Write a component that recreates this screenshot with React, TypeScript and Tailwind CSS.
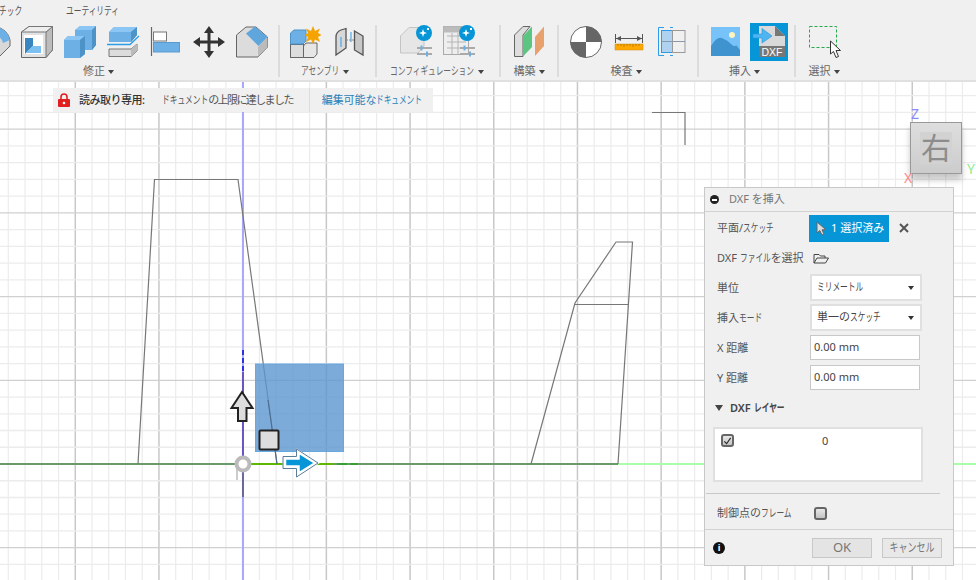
import type { ReactNode } from "react"

const MAJOR = 83.7
const MINOR = MAJOR / 5

const vLines = Array.from({ length: 60 }, (_, i) => ({ x: 8.3 + i * MINOR, major: i % 5 === 4 }))
const hLines = Array.from({ length: 32 }, (_, i) => ({ y: 45.5 + i * MINOR, major: i % 5 === 0 }))

// katakana in the reference are condensed to about 7.7px per character
function K({ children }: { children: string }) {
  return (
    <span
      className="inline-block origin-left scale-x-[0.7] whitespace-nowrap"
      style={{ width: children.length * 7.7 }}
    >
      {children}
    </span>
  )
}

function Ico({ x, children }: { x: number; children: ReactNode }) {
  return (
    <svg viewBox={`${x} 23 43 38`} className="h-[38px] w-[43px] shrink-0 overflow-visible">
      {children}
    </svg>
  )
}

function Caret() {
  return <span className="ml-[3px] inline-block h-0 w-0 border-x-[3px] border-t-[4px] border-x-transparent border-t-[#444] align-middle" />
}

function Group({ width, pad, label, end, labelPad, children }: { width: string; pad?: string; label: ReactNode; end?: boolean; labelPad?: string; children: ReactNode }) {
  return (
    <div className={`flex shrink-0 flex-col ${width}`}>
      <div className={`flex h-[38px] ${end ? "justify-end pr-[4px]" : ""} ${pad ?? ""}`}>{children}</div>
      <div className={`mt-[2px] text-center text-[11px] leading-[16px] text-[#666] ${labelPad ?? ""}`}>
        {label}
        <Caret />
      </div>
    </div>
  )
}

function Sep() {
  return <div className="mt-[2px] h-[52px] w-[2px] shrink-0 bg-[#dcdcdc]" />
}

function Toolbar() {
  return (
    <div className="h-[82px] overflow-hidden border-b-2 border-[#e0e0e0] bg-[#f0f0f0]">
      <div className="h-[23px] text-[11px] leading-[22px] text-[#555]">
        <div className="flex h-[22px]">
          <div className="w-[66px] -translate-x-[1px]">
            <K>チック</K>
          </div>
          <K>ユーティリティ</K>
        </div>
      </div>
      <div className="flex -ml-[84px]">
        <Group width="w-[362px]" end labelPad="pl-[3px]" label="修正">
          <Ico x={-27}>
            <path d="M-4 27 A16 16 0 0 1 10 40 L10 46 L0 56 L-6 56 Z" fill="#d8d8d8" stroke="#666" />
            <path d="M-4 27 A16 16 0 0 1 10 40 L3 43 A9 9 0 0 0 -4 36 Z" fill="#6cb0e6" />
          </Ico>
          <Ico x={16}>
            <path d="M21.5 57.5 V32 L29 26.5 H52.5 V50 L46 57.5 Z" fill="#e2e2e2" stroke="#666" />
            <path d="M46 32 L52.5 26.5 V50 L46 57.5 Z" fill="#bcbcbc" stroke="#777" />
            <path d="M21.5 32 L29 26.5 H52.5 L46 32 Z" fill="#eee" stroke="#777" />
            <rect x="24" y="35" width="19" height="19" fill="#fff" />
            <path d="M25 38 H33 V46 L25 54 Z" fill="#3a86bf" />
            <path d="M33 46 H41 V53 H26 Z" fill="#7cc0f2" />
          </Ico>
          <Ico x={59}>
            <path d="M64 40 L68 36 H75 V30 L80 26 H96 V45 L92 50 H85 V54 L80 58 H64 Z" fill="#6cb0e6" />
            <path d="M75 30 L80 26 H96 L92 30 Z M64 40 L68 36 H84 L80 40 Z" fill="#8cc6f5" />
            <path d="M92 30 L96 26 V45 L92 50 Z M80 40 L85 36 V54 L80 58 Z" fill="#4d93c8" />
          </Ico>
          <Ico x={102}>
            <path d="M109 49 H131 L137 44 V51 L131 56.5 H109 Z" fill="#dcdcdc" stroke="#777" />
            <path d="M131 49 L137 44 V51 L131 56.5 Z" fill="#bbb" />
            <path d="M109 32 L114 27 H137 V35 L131 42 H109 Z" fill="#6cb0e6" />
            <path d="M109 32 L114 27 H137 L131 32 Z" fill="#8cc6f5" />
            <path d="M131 32 L137 27 V35 L131 42 Z" fill="#4d93c8" />
            <path d="M107 44.5 H130 L139 36" fill="none" stroke="#2d9be8" strokeWidth="1.3" />
          </Ico>
          <Ico x={145}>
            <path d="M151.5 27 V56" stroke="#666" strokeWidth="1.2" />
            <rect x="153.5" y="32" width="13" height="9" fill="#fff" stroke="#777" />
            <rect x="153.5" y="42.5" width="26" height="9.5" fill="#6cb0e6" stroke="#5a9bd0" />
          </Ico>
          <Ico x={188}>
            <path d="M209 30 V54 M197 42 H221" stroke="#333" strokeWidth="3" />
            <path d="M209 26 L214 33 H204 Z M209 58 L214 51 H204 Z M193 42 L200 37 V47 Z M225 42 L218 37 V47 Z" fill="#333" />
          </Ico>
          <Ico x={231}>
            <path d="M236.5 57 V35 L246 27 H256 L267.5 37 V47 L258 57 Z" fill="#dcdcdc" stroke="#666" />
            <path d="M258 57 V47 L267.5 37 V47 Z" fill="#bbb" />
            <path d="M246 33.5 L255 26.5 L267.5 37 L258.5 46 Z" fill="#5fa6dd" />
          </Ico>
        </Group>
        <Sep />
        <Group width="w-[95px]" pad="pl-[4px]" labelPad="pr-[5px]" label={<K>アセンブリ</K>}>
          <Ico x={284}>
            <rect x="290.5" y="44.5" width="13" height="13" fill="#ddd" stroke="#666" />
            <path d="M303.5 57.5 V46 L306 43 H317 V54 L314 57.5 Z" fill="#e6e6e6" stroke="#666" />
            <path d="M290.5 44 V33 L294 30 H306 V41 L303 44 Z" fill="#6cb0e6" stroke="#4d93c8" />
            <path d="M313 26 L315 31 L320 28.5 L318 33 L321.5 35 L318 37 L320 42 L315 39.5 L313 44 L311 39.5 L306 42 L308 37 L304.5 35 L308 33 L306 28.5 L311 31 Z" fill="#f5a300" />
          </Ico>
          <Ico x={327}>
            <path d="M336 37 Q336 32 341 30 L346 28.5 V48 L336 55 Z" fill="#d8d8d8" stroke="#555" strokeWidth="1.3" />
            <path d="M354.5 31 L363 36 V55 L354.5 50 Z" fill="#c8c8c8" stroke="#555" strokeWidth="1.3" />
            <path d="M341 37 V47 M351 32 V42" stroke="#2d9be8" />
            <path d="M346 40 H354" stroke="#888" strokeDasharray="2 1" />
          </Ico>
        </Group>
        <Sep />
        <Group width="w-[122px]" pad="pl-[18px]" labelPad="pr-[2px]" label={<K>コンフィギュレーション</K>}>
          <Ico x={395}>
            <path d="M400.5 53 V36 L409 27.5 H424 V46 L418 53 Z" fill="#e6e6e6" stroke="#c4c4c4" />
            <circle cx="424" cy="33" r="8" fill="#0696d7" />
            <path d="M423 29 L424 32 L427 33 L424 34 L423 37 L422 34 L419 33 L422 32 Z M427 28 H429 V30 H427 Z" fill="#fff" />
            <path d="M417 48 H432 M417 54 H432" stroke="#aaa" strokeWidth="2" />
            <path d="M421.5 45.5 V50.5 M427 51.5 V56.5" stroke="#6cb0e6" strokeWidth="2" />
          </Ico>
          <Ico x={438}>
            <rect x="443.5" y="26.5" width="25" height="28" fill="#eee" stroke="#aaa" />
            <rect x="443.5" y="26.5" width="25" height="6" fill="#bbb" />
            <path d="M447 36 H466 M447 42 H466 M447 48 H466 M452 33 V54 M458 33 V54" stroke="#b4b4b4" />
            <circle cx="467" cy="33" r="8" fill="#0696d7" />
            <path d="M466 29 L467 32 L470 33 L467 34 L466 37 L465 34 L462 33 L465 32 Z M470 28 H472 V30 H470 Z" fill="#fff" />
            <path d="M460 48 H475 M460 54 H475" stroke="#aaa" strokeWidth="2" />
            <path d="M464.5 45.5 V50.5 M470 51.5 V56.5" stroke="#6cb0e6" strokeWidth="2" />
          </Ico>
        </Group>
        <Sep />
        <Group width="w-[56px]" pad="pl-[7px]" label="構築">
          <Ico x={508}>
            <path d="M514.5 56.5 V35 L523 26.5 H530 L523 35 V56.5 Z" fill="#dedede" stroke="#666" />
            <path d="M523 36 L532 26.5 V47 L523 56.5 Z" fill="#5cc581" />
            <path d="M535 37 L544 26.5 V46 L535 56 Z" fill="#e8a06c" />
          </Ico>
        </Group>
        <Sep />
        <Group width="w-[138px]" pad="pl-[6px]" labelPad="pr-[4px]" label="検査">
          <Ico x={565}>
            <circle cx="586" cy="42" r="15.5" fill="#fff" stroke="#666" />
            <path d="M586 42 V26.5 A15.5 15.5 0 0 1 601.5 42 Z M586 42 V57.5 A15.5 15.5 0 0 1 570.5 42 Z" fill="#666" />
          </Ico>
          <Ico x={608}>
            <path d="M615.5 34 V43 M642.5 34 V43 M616 38.5 H642" stroke="#555" />
            <path d="M616 38.5 L621 36 V41 Z M642 38.5 L637 36 V41 Z" fill="#555" />
            <rect x="615" y="44" width="28" height="6" fill="#ffa800" stroke="#c98a10" strokeWidth="0.5" />
            <path d="M618 44 V46 M621 44 V46 M624 44 V47 M627 44 V46 M630 44 V46 M633 44 V47 M636 44 V46 M639 44 V46" stroke="#a06c00" strokeWidth="0.7" />
          </Ico>
          <Ico x={651}>
            <rect x="661.5" y="30.5" width="11" height="22" fill="#aed2f0" stroke="#2d9be8" />
            <rect x="672.5" y="30.5" width="12.5" height="22" fill="none" stroke="#999" />
            <path d="M661.5 41.5 H685" stroke="#8a9aa8" />
            <path d="M664 27.5 H658.5 V55.5 H664 M670 27.5 H673 M670 55.5 H673" fill="none" stroke="#2d9be8" />
          </Ico>
        </Group>
        <Sep />
        <Group width="w-[95px]" pad="pl-[6px]" labelPad="pr-[4px]" label="挿入">
          <Ico x={705}>
            <rect x="711" y="27" width="29" height="29" fill="#77c2f9" />
            <path d="M711 46 Q717 36 722 38 T731 44 T736 45 L740 50 V56 H711 Z" fill="#3f94cf" />
            <circle cx="732" cy="35" r="3" fill="#fdf5c0" />
          </Ico>
          <Ico x={748}>
            <rect x="750" y="23" width="38" height="38" fill="#0696d7" />
            <path d="M759 26 H775 L785 36 V57 H759 Z" fill="#d9d9d9" />
            <path d="M775 26 L785 36 H775 Z" fill="#777" />
            <rect x="759" y="46" width="26" height="11" fill="#777" />
            <text x="772" y="55.5" textAnchor="middle" fill="#fff" fontSize="10.5" fontFamily="'Liberation Sans', sans-serif">
              DXF
            </text>
            <path d="M753 34 H762 V28.5 L772 36 L762 43 V38 H753 Z" fill="#4fb4ef" stroke="#1e9be0" strokeWidth="0.6" />
          </Ico>
        </Group>
        <Sep />
        <Group width="w-[58px]" pad="pl-[8px]" labelPad="pr-[2px]" label="選択">
          <Ico x={804}>
            <rect x="809.5" y="26.5" width="27" height="21" fill="none" stroke="#22aa4c" strokeDasharray="3 2" />
            <path d="M830.5 41 V54 L833.5 51.5 L836 57.5 L838.5 56.5 L836 50.5 L840.5 50.5 Z" fill="#fff" stroke="#333" />
          </Ico>
        </Group>
      </div>
    </div>
  )
}

function CanvasDrawing() {
  return (
    <svg viewBox="0 82 976 498" className="absolute inset-0 h-full w-full">
      {vLines.map((l) => (
        <line key={l.x} x1={l.x} x2={l.x} y1={82} y2={580} stroke={l.major ? "#c8c8c8" : "#ececec"} strokeWidth={l.major ? 1.5 : 1.2} />
      ))}
      {hLines.map((l) => (
        <line key={l.y} x1={0} x2={976} y1={l.y} y2={l.y} stroke={l.major ? "#d0d0d0" : "#ececec"} strokeWidth={1.3} />
      ))}

      <path d="M652 112.5 H685 V145" fill="none" stroke="#777" strokeWidth={1.2} />

      <line x1={243} x2={243} y1={82} y2={580} stroke="#a8a8ff" strokeWidth={2} />
      <line x1={618} x2={976} y1={464} y2={464} stroke="#a8ffa8" strokeWidth={2} />
      <line x1={0} x2={618} y1={464} y2={464} stroke="#6a9a6a" strokeWidth={2} />

      <path d="M138 464 L154.5 179.5 H238 L277 464" fill="none" stroke="#777" strokeWidth={1.2} />
      <path d="M531 464 L575 303 L616 242 H632.5 L618 464 M575 304.5 H628" fill="none" stroke="#777" strokeWidth={1.2} />

      <line x1={243} x2={243} y1={350} y2={372} stroke="#2f2fe8" strokeWidth={2} strokeDasharray="5 3" />
      <line x1={243} x2={243} y1={372} y2={458} stroke="#6b55c4" strokeWidth={2} />
      <line x1={243} x2={243} y1={470} y2={497} stroke="#6a6a9a" strokeWidth={2} />
      <line x1={250} x2={334} y1={464} y2={464} stroke="#5cb800" strokeWidth={2} />
      <line x1={337} x2={358} y1={464} y2={464} stroke="#36a030" strokeWidth={2} strokeDasharray="10 3" />
      <line x1={237} x2={237} y1={464} y2={480} stroke="#999" strokeWidth={1} />

      <rect x={255.5} y={364} width={88} height={87.5} fill="#5b95cf" fillOpacity={0.8} stroke="#66a8e0" />
      <line x1={268} x2={277} y1={400} y2={464} stroke="#4a6a8a" strokeWidth={1} />

      <circle cx={243} cy={464} r={6.5} fill="#fff" stroke="#bbb" strokeWidth={4} />
      <path d="M242 392 L252.5 408 H246.5 V421 H238 V408 H231.5 Z" fill="#ddd" stroke="#222" strokeWidth={2} />
      <rect x={259.5} y={430.5} width={19} height={19} rx={1} fill="#ddd" stroke="#222" strokeWidth={2} />
      <path d="M284.5 458 H298 V451.5 L316.5 463 L298 474.5 V467 H284.5 Z" fill="#0696d7" stroke="#fff" strokeWidth={3.5} />
      <path d="M283 456.5 H296.5 V449 L318 463 L296.5 477 V468.5 H283 Z" fill="none" stroke="#5a7d9a" strokeWidth={1} />
    </svg>
  )
}

function ViewCube() {
  return (
    <div className="absolute left-[910px] top-[40px]">
      <div className="flex h-[52px] w-[52px] items-center justify-center border border-[#999] bg-gradient-to-b from-[#dedede] to-[#cccccc] shadow-[0_6px_6px_rgba(0,0,0,0.22)]">
        <div className="flex h-[32px] w-[32px] items-center justify-center bg-[#d2d2d2] text-[30px] leading-[32px] text-[#8c8c8c]">右</div>
      </div>
      <span className="absolute -top-[15px] left-[1px] text-[14px] leading-[14px] text-[#8a8aff]">Z</span>
      <span className="absolute left-[-6px] top-[49px] text-[14px] leading-[14px] text-[#ff8a8a]">X</span>
      <span className="absolute left-[57px] top-[40px] text-[14px] leading-[14px] text-[#8aee8a]">Y</span>
    </div>
  )
}

function Banner() {
  return (
    <div className="absolute left-[53px] top-[6px] flex h-[24px] w-[380px] items-center bg-[#f0f0f0] text-[11px] text-[#444]">
      <svg viewBox="0 0 12 14" className="ml-[5px] h-[14px] w-[12px]">
        <path d="M3 6.5 V4 A3 3 0 0 1 9 4 V6.5" fill="none" stroke="#e02020" strokeWidth="1.6" />
        <rect x="0" y="6" width="12" height="8" rx="1" fill="#e02020" />
        <circle cx="6" cy="10" r="1.3" fill="#fff" />
      </svg>
      <span className="ml-[9px] w-[83px] font-medium tracking-[-0.5px] text-[#333]">読み取り専用:</span>
      <span className="whitespace-nowrap text-[#555]">
        <K>ドキュメント</K>
        <span className="tracking-[-1.6px]">の上限に達しました</span>
      </span>
      <div className="ml-[16px] h-full w-[1px] bg-[#dcdcdc]" />
      <span className="ml-[12px] whitespace-nowrap tracking-[-0.1px] text-[#2a7fb8]">
        編集可能な<K>ドキュメント</K>
      </span>
    </div>
  )
}

function SelectBox({ children }: { children: ReactNode }) {
  return (
    <div className="-mt-[1px] ml-[1px] flex h-[27px] w-[112px] items-center justify-between border-2 border-[#e0e0e0] bg-white pl-[5px] pr-[6px] text-[11px] text-[#444]">
      <span className="whitespace-nowrap">{children}</span>
      <span className="h-0 w-0 border-x-[3.5px] border-t-[4px] border-x-transparent border-t-[#333]" />
    </div>
  )
}

function Row({ label, className, children }: { label: ReactNode; className?: string; children?: ReactNode }) {
  return (
    <div className={`flex items-center pl-[12px] ${className ?? "h-[30px]"}`}>
      <div className="w-[92px] shrink-0 whitespace-nowrap text-[11px] text-[#555]">{label}</div>
      {children}
    </div>
  )
}

function NumberField({ value }: { value: string }) {
  return (
    <div className="-mt-[2px] ml-[1px] flex h-[25px] w-[110px] items-center border border-[#c8c8c8] bg-white pl-[3px] text-[11px] text-[#444]">{value}</div>
  )
}

function Check({ checked }: { checked?: boolean }) {
  return (
    <div className="flex h-[13px] w-[13px] items-center justify-center rounded-[3px] border-2 border-[#666] bg-gradient-to-b from-[#e8e8e8] to-[#c4c4c4]">
      {checked && (
        <svg viewBox="0 0 10 10" className="h-[10px] w-[10px]">
          <path d="M1.5 5.5 L4 8 L8.5 1.5" fill="none" stroke="#222" strokeWidth="1.2" />
        </svg>
      )}
    </div>
  )
}

function DxfPanel() {
  return (
    <div className="absolute left-[704px] top-[105px] flex h-[379px] w-[250px] flex-col border border-[#c8c8c8] bg-[#f0f0f0]">
      <div className="flex h-[24px] shrink-0 items-center border-b border-[#d2d2d2] pl-[5px] text-[11px] text-[#777]">
        <span className="flex h-[9px] w-[9px] items-center justify-center rounded-full bg-[#222]">
          <span className="h-[2px] w-[5px] bg-white" />
        </span>
        <span className="ml-[10px]">DXF を挿入</span>
      </div>
      <div className="mt-[1px]">
        <Row label={<>平面/<K>スケッチ</K></>}>
          <div className="flex h-[27px] w-[80px] items-center bg-[#0696d7] pl-[7px] text-[11px] text-white">
            <svg viewBox="0 0 11 15" className="h-[15px] w-[11px]">
              <path d="M1 1 V12 L3.8 9.6 L6 14 L8 13 L6 8.8 L10 8.8 Z" fill="#ddd" stroke="#666" />
            </svg>
            <span className="ml-[4px] whitespace-nowrap">1 選択済み</span>
          </div>
          <svg viewBox="0 0 10 10" className="ml-[10px] h-[10px] w-[10px]">
            <path d="M1 1 L9 9 M9 1 L1 9" stroke="#555" strokeWidth="2" />
          </svg>
        </Row>
        <Row label={<>DXF <K>ファイル</K>を選択</>}>
          <svg viewBox="0 0 16 11" className="ml-[4px] h-[11px] w-[16px]">
            <path d="M1 10 V1.5 H6 L7.5 3 H12 V5 M1 10 L4 5 H15.5 L12.5 10 Z" fill="#f0f0f0" stroke="#444" />
          </svg>
        </Row>
        <Row label="単位">
          <SelectBox>
            <K>ミリメートル</K>
          </SelectBox>
        </Row>
        <Row label={<>挿入<K>モード</K></>}>
          <SelectBox>
            単一の<K>スケッチ</K>
          </SelectBox>
        </Row>
        <Row label="X 距離">
          <NumberField value="0.00 mm" />
        </Row>
        <Row label="Y 距離">
          <NumberField value="0.00 mm" />
        </Row>
        <div className="flex h-[30px] items-center pl-[10px] text-[11px] font-semibold text-[#444]">
          <span className="h-0 w-0 border-x-[4px] border-t-[6px] border-x-transparent border-t-[#444]" />
          <span className="ml-[7px]">
            DXF <K>レイヤー</K>
          </span>
        </div>
        <div className="ml-[8px] mt-[4px] flex h-[55px] w-[210px] items-start border-2 border-[#e0e0e0] bg-white pl-[6px] pt-[5px] text-[11px] text-[#444]">
          <Check checked />
          <span className="ml-[88px] leading-[14px]">0</span>
        </div>
        <div className="ml-[1px] mt-[11px] h-[1px] w-[234px] bg-[#c8c8c8]" />
        <Row label={<>制御点の<K>フレーム</K></>} className="h-[35px] pt-[4px]">
          <div className="-mt-[1px] ml-[5px]">
            <Check />
          </div>
        </Row>
      </div>
      <div className="flex flex-1 items-center border-t border-[#d2d2d2] pl-[8px]">
        <span className="flex h-[12px] w-[12px] items-center justify-center rounded-full bg-[#111] text-[9px] font-bold leading-[12px] text-white">i</span>
        <div className="ml-[87px] flex h-[20px] w-[60px] items-center justify-center border border-[#c8c8c8] bg-[#e4e4e4] text-[13px] text-[#777]">OK</div>
        <div className="ml-[10px] flex h-[20px] w-[60px] items-center justify-center border border-[#c8c8c8] bg-[#e8e8e8] text-[12px] text-[#777]">
          <span className="inline-block scale-x-[0.75] whitespace-nowrap">キャンセル</span>
        </div>
      </div>
    </div>
  )
}

export default function App() {
  return (
    <div className="flex h-[580px] w-[976px] flex-col overflow-hidden bg-white font-['Noto_Sans','Noto_Sans_CJK_JP',sans-serif]">
      <Toolbar />
      <div className="relative flex-1">
        <CanvasDrawing />
        <Banner />
        <ViewCube />
        <DxfPanel />
      </div>
    </div>
  )
}
